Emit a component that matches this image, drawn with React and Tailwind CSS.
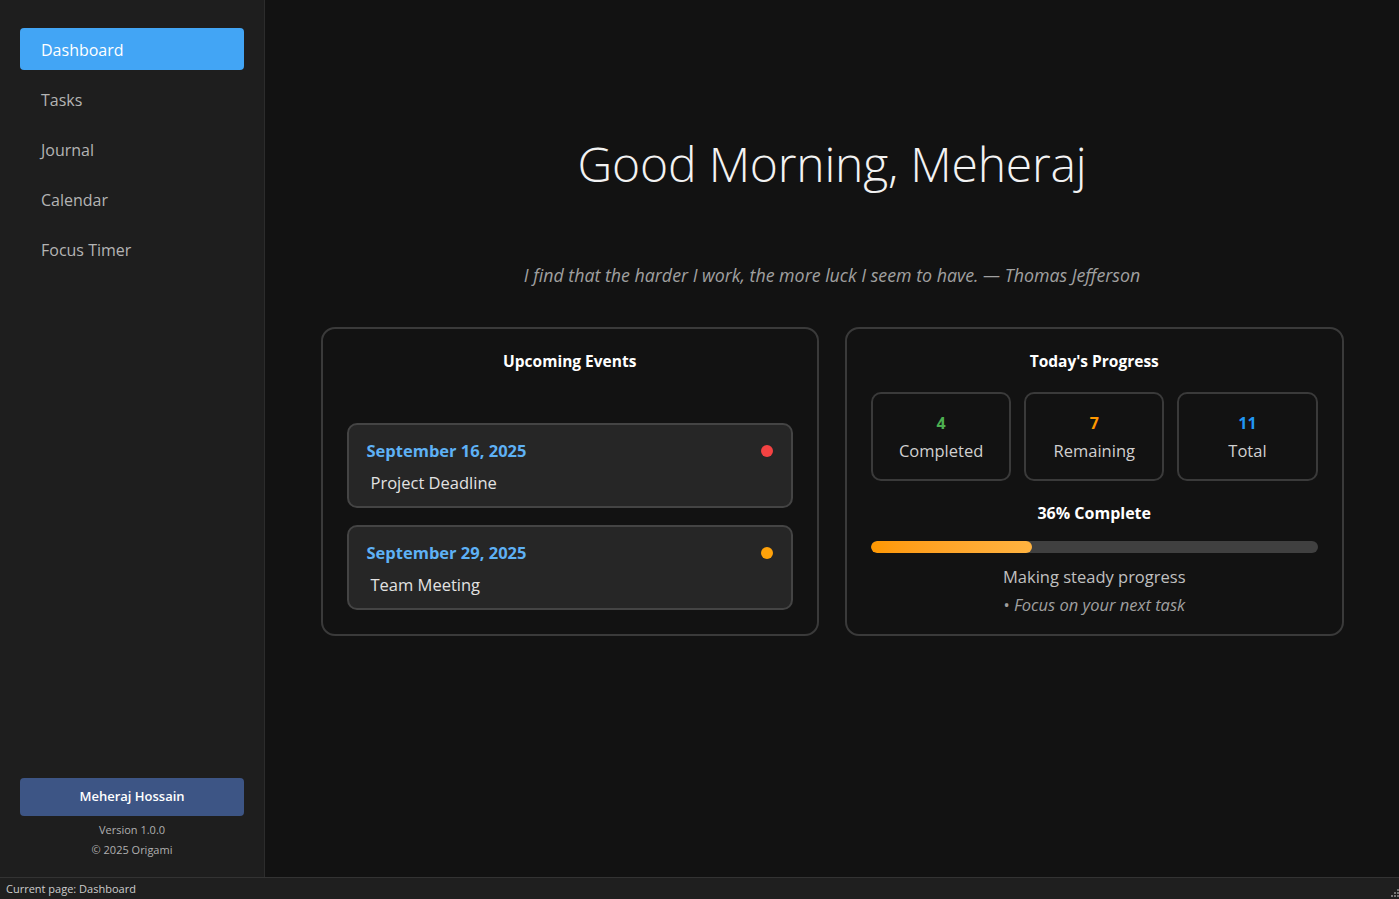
import React from "react";

const font = { fontFamily: '"Open Sans", "Noto Sans", sans-serif' };

function NavItem({ label, active }) {
  return (
    <div
      className={
        "h-[42px] rounded-[4px] flex items-center pl-[21px] pt-[2px] text-[16px] " +
        (active ? "bg-[#42a5f5] text-white" : "text-[#b4b4b4]")
      }
    >
      {label}
    </div>
  );
}

function EventItem({ date, title, dot }) {
  return (
    <div className="h-[85px] rounded-[10px] border-2 border-[#444444] bg-[#262626] flex items-start justify-between pl-[18px] pr-[18px] pt-[14px]">
      <div className="flex flex-col">
        <div className="text-[16.5px] font-bold text-[#5eb1f5] leading-[24px]">{date}</div>
        <div className="text-[16.5px] text-[#e2e2e2] leading-[24px] mt-[8px] pl-[4px]">{title}</div>
      </div>
      <div className={"w-[12px] h-[12px] rounded-full mt-[6px] " + dot} />
    </div>
  );
}

function Stat({ value, label, color }) {
  return (
    <div className="flex-1 h-[89px] rounded-[10px] border-2 border-[#3a3a3a] flex flex-col items-center justify-center pt-[2px]">
      <div className={"text-[16px] font-bold leading-[22px] " + color}>{value}</div>
      <div className="text-[16.5px] text-[#d0d0d0] leading-[24px] mt-[5px]">{label}</div>
    </div>
  );
}

export default function App() {
  return (
    <div className="w-[1399px] h-[899px] flex flex-col bg-[#121212] overflow-hidden" style={font}>
      <div className="flex flex-1 min-h-0">
        <aside className="w-[265px] bg-[#1e1e1e] border-r border-[#2c2c2c] flex flex-col px-[20px] pt-[28px] pb-[19px]">
          <nav className="flex flex-col gap-[8px]">
            <NavItem label="Dashboard" active />
            <NavItem label="Tasks" />
            <NavItem label="Journal" />
            <NavItem label="Calendar" />
            <NavItem label="Focus Timer" />
          </nav>
          <div className="mt-auto flex flex-col items-center">
            <div className="w-full h-[38px] rounded-[4px] bg-[#3d5585] flex items-center justify-center text-white text-[13px] font-semibold">
              Meheraj Hossain
            </div>
            <div className="text-[11px] text-[#b0b0b0] mt-[6px] leading-[16px]">Version 1.0.0</div>
            <div className="text-[11px] text-[#b0b0b0] mt-[4px] leading-[16px]">© 2025 Origami</div>
          </div>
        </aside>
        <main className="flex-1 flex flex-col items-center pt-[132px]">
          <h1 className="text-[48px] font-light text-[#f2f2f2] leading-[64px] tracking-[-0.2px]">
            Good Morning, Meheraj
          </h1>
          <p className="mt-[67px] text-[17.8px] italic text-[#a0a0a0] leading-[24px]">
            I find that the harder I work, the more luck I seem to have. — Thomas Jefferson
          </p>
          <div className="mt-[40px] w-[1023px] flex gap-[26px]">
            <section className="flex-1 h-[309px] rounded-[14px] border-2 border-[#3a3a3a] px-[24px] pt-[20px]">
              <div className="text-center text-[15.5px] font-bold text-white leading-[24px]">Upcoming Events</div>
              <div className="mt-[50px] flex flex-col gap-[17px]">
                <EventItem date="September 16, 2025" title="Project Deadline" dot="bg-[#f44242]" />
                <EventItem date="September 29, 2025" title="Team Meeting" dot="bg-[#ffa20a]" />
              </div>
            </section>
            <section className="flex-1 h-[309px] rounded-[14px] border-2 border-[#3a3a3a] px-[24px] pt-[20px]">
              <div className="text-center text-[15.5px] font-bold text-white leading-[24px]">Today's Progress</div>
              <div className="mt-[19px] flex gap-[13px]">
                <Stat value="4" label="Completed" color="text-[#4caf50]" />
                <Stat value="7" label="Remaining" color="text-[#ff9800]" />
                <Stat value="11" label="Total" color="text-[#2196f3]" />
              </div>
              <div className="mt-[20px] text-center text-[16px] font-bold text-white leading-[24px]">36% Complete</div>
              <div className="mt-[16px] h-[12px] rounded-full bg-[#404040] overflow-hidden">
                <div
                  className="h-full rounded-full bg-gradient-to-r from-[#ff9800] to-[#ffb340]"
                  style={{ width: "36%" }}
                />
              </div>
              <div className="mt-[12px] text-center text-[16.5px] text-[#c0c0c0] leading-[24px]">Making steady progress</div>
              <div className="mt-[4px] text-center text-[16.5px] text-[#a0a0a0] leading-[24px]">
                • <span className="italic">Focus on your next task</span>
              </div>
            </section>
          </div>
        </main>
      </div>
      <footer className="h-[22px] bg-[#1f1f1f] border-t border-[#333333] flex items-center justify-between pl-[6px] pt-[1px] relative">
        <span className="text-[11px] text-[#cccccc]">Current page: Dashboard</span>
        <svg width="10" height="10" viewBox="0 0 10 10" className="absolute right-0 bottom-0">
          <rect x="8" y="0" width="2" height="2" fill="#777" />
          <rect x="5" y="3" width="2" height="2" fill="#777" />
          <rect x="8" y="3" width="2" height="2" fill="#777" />
          <rect x="2" y="6" width="2" height="2" fill="#777" />
          <rect x="5" y="6" width="2" height="2" fill="#777" />
          <rect x="8" y="6" width="2" height="2" fill="#777" />
        </svg>
      </footer>
    </div>
  );
}
